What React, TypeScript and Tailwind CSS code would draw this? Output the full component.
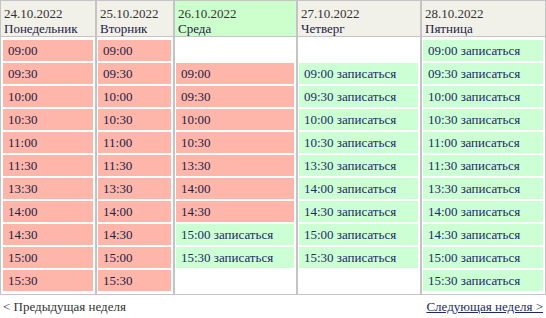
import React from 'react';

type Slot = { time: string; free: boolean };

interface Day {
  date: string;
  name: string;
  today?: boolean;
  col: string;
  body: string;
  slots: Slot[];
}

const busy = (t: string): Slot => ({ time: t, free: false });
const free = (t: string): Slot => ({ time: t, free: true });

const allTimes = ['09:00', '09:30', '10:00', '10:30', '11:00', '11:30', '13:30', '14:00', '14:30', '15:00', '15:30'];

const days: Day[] = [
  { date: '24.10.2022', name: 'Понедельник', col: 'w-[95px] border-l', body: 'pl-[2px]', slots: allTimes.map(busy) },
  { date: '25.10.2022', name: 'Вторник', col: 'w-[78px] border-l-2', body: 'pl-[1px]', slots: allTimes.map(busy) },
  {
    date: '26.10.2022',
    name: 'Среда',
    today: true,
    col: 'w-[123px] border-l-2',
    body: 'pl-[1px]',
    slots: [...['09:00', '09:30', '10:00', '10:30', '13:30', '14:00', '14:30'].map(busy), free('15:00'), free('15:30')],
  },
  {
    date: '27.10.2022',
    name: 'Четверг',
    col: 'w-[124px] border-l-2',
    body: 'pl-[1px]',
    slots: ['09:00', '09:30', '10:00', '10:30', '13:30', '14:00', '14:30', '15:00', '15:30'].map(free),
  },
  { date: '28.10.2022', name: 'Пятница', col: 'w-[126px] border-l-2 border-r', body: 'pl-[1px]', slots: allTimes.map(free) },
];

export default function App() {
  return (
    <div className="w-[546px] h-[318px] bg-white font-['Liberation_Serif'] text-[13px] leading-[15px] text-[#222244]">
      <div className="flex border-t border-b border-[#c4c4c4]">
        {days.map((day) => (
          <div key={day.date} className={`flex flex-col border-[#c4c4c4] ${day.col}`}>
            {/* Day header */}
            <div
              className={`h-[36px] border-b border-[#c4c4c4] pt-[5px] pl-[3px] ${
                day.today ? 'bg-[#ccffcc]' : 'bg-[#f1f0e9]'
              }`}
            >
              <div className="text-[#333333]">{day.date}</div>
              <div>{day.name}</div>
            </div>
            {/* Slots */}
            <div className={`h-[257px] flex flex-col justify-center gap-[2px] pr-[2px] ${day.body}`}>
              {day.slots.map((slot) => (
                <div
                  key={slot.time}
                  className={`h-[21px] flex items-center pl-[5px] whitespace-nowrap ${
                    slot.free ? 'bg-[#ccffd4] text-[#1c2a66]' : 'bg-[#ffb6aa]'
                  }`}
                >
                  {slot.free ? `${slot.time} записаться` : slot.time}
                </div>
              ))}
            </div>
          </div>
        ))}
      </div>
      <div className="flex justify-between px-[3px] pt-[4px]">
        <span className="text-[#333333]">&lt; Предыдущая неделя</span>
        <a href="#" className="underline text-[#1c2a66]">
          Следующая неделя &gt;
        </a>
      </div>
    </div>
  );
}
